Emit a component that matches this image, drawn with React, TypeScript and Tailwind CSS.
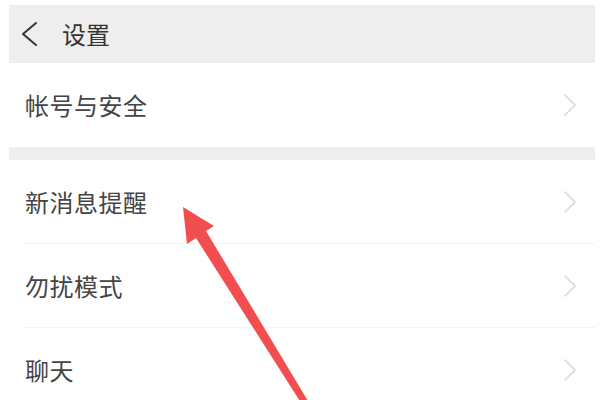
const font = { fontFamily: '"Noto Sans CJK SC", "Noto Sans", sans-serif' };

type Row = { label: string; last?: boolean };

const groupTwo: Row[] = [
  { label: "新消息提醒" },
  { label: "勿扰模式" },
  { label: "聊天", last: true },
];

const RightChevron = () => (
  <svg width="14" height="24" viewBox="0 0 14 24" fill="none" className="mr-[4px]">
    <path d="M2 2 L12 12 L2 22" stroke="#d8d8d8" strokeWidth="1.6" strokeLinecap="round" strokeLinejoin="round" />
  </svg>
);

const SettingRow = ({ label, last }: Row) => (
  <div className="flex h-[84px] items-center pl-[16px]">
    <div
      className={
        "flex h-full flex-1 items-center justify-between pr-[14px] " +
        (last ? "" : "border-b border-[#f3f3f3]")
      }
    >
      <span className="text-[24px] leading-none tracking-[0.5px] text-[#444]">{label}</span>
      <RightChevron />
    </div>
  </div>
);

export default function App() {
  return (
    <div className="relative h-[400px] w-[600px] overflow-hidden bg-white pl-[9px] pr-[5px] pt-[5px]" style={font}>
      {/* Header */}
      <div className="flex h-[58px] items-center bg-[#eeeeee]">
        <svg width="18" height="26" viewBox="0 0 18 26" fill="none" className="ml-[12px]">
          <path d="M15 2 L2 13 L15 24" stroke="#333" strokeWidth="2" strokeLinecap="round" strokeLinejoin="round" />
        </svg>
        <span className="ml-[23px] text-[24px] leading-none text-[#333]">设置</span>
      </div>

      <SettingRow label="帐号与安全" last />

      <div className="h-[13px] bg-[#eeeeee]" />

      {groupTwo.map((row) => (
        <SettingRow key={row.label} {...row} />
      ))}

      {/* Red annotation arrow */}
      <svg className="pointer-events-none absolute left-0 top-0" width="600" height="400" viewBox="0 0 600 400">
        <polygon
          points="183,207 214,226 206,231 311,406 303,406 196,238 187,244"
          fill="#f24e50"
        />
      </svg>
    </div>
  );
}
